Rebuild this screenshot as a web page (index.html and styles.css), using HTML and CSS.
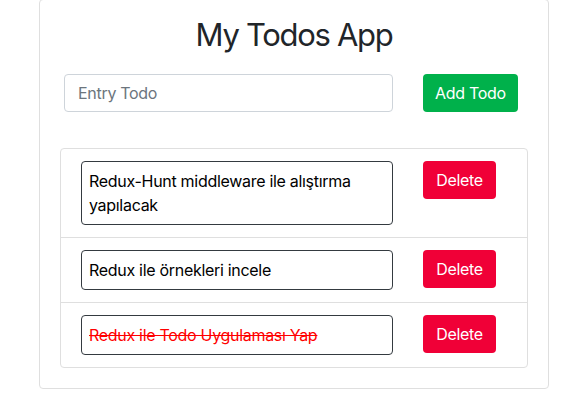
FILE: index.html
```html
<!DOCTYPE html>
<html lang="tr">
<head>
<meta charset="utf-8">
<title>My Todos App</title>
<link rel="stylesheet" href="styles.css">
</head>
<body>
<div class="card">
  <h2 class="title">My Todos App</h2>
  <form class="entry">
    <input class="entry-input" type="text" placeholder="Entry Todo">
    <button class="btn btn-add" type="button">Add Todo</button>
  </form>
  <ul class="list">
    <li class="item">
      <div class="todo-text">Redux-Hunt middleware ile alıştırma yapılacak</div>
      <button class="btn btn-del" type="button">Delete</button>
    </li>
    <li class="item">
      <div class="todo-text">Redux ile örnekleri incele</div>
      <button class="btn btn-del" type="button">Delete</button>
    </li>
    <li class="item">
      <div class="todo-text done">Redux ile Todo Uygulaması Yap</div>
      <button class="btn btn-del" type="button">Delete</button>
    </li>
  </ul>
</div>
</body>
</html>
```
FILE: styles.css
```css
* { box-sizing: border-box; }
html, body { margin: 0; padding: 0; background: #fff; }
body {
  font-family: Inter, "Helvetica Neue", "Liberation Sans", Arial, sans-serif;
  font-size: 16px;
  line-height: 24px;
  letter-spacing: -0.3px;
  color: #212529;
}
.card {
  width: 510px;
  margin: -1px 0 0 39px;
  padding: 16px 20px 20px;
  border: 1px solid #dfdfdf;
  border-radius: 4px;
}
.title {
  margin: 0 0 20px;
  font-size: 31px;
  line-height: 38px;
  font-weight: 400;
  letter-spacing: -1.3px;
  text-align: center;
  color: #212529;
}
.entry {
  display: flex;
  gap: 30px;
  margin: 0 0 36px;
  padding-left: 4px;
}
.entry-input {
  width: 329px;
  height: 38px;
  padding: 6px 13px;
  border: 1px solid #ced4da;
  border-radius: 4px;
  font: inherit;
  letter-spacing: inherit;
  color: #495057;
}
.entry-input::placeholder { color: #6c757d; }
.btn {
  height: 38px;
  padding: 6px 0;
  border: 0;
  border-radius: 4px;
  font: inherit;
  letter-spacing: inherit;
  white-space: nowrap;
  text-align: center;
  color: #fff;
  cursor: pointer;
}
.btn-add { width: 95px; background: #00b14b; }
.btn-del { width: 73px; background: #f00037; }
.list {
  list-style: none;
  margin: 0;
  padding: 0;
  border: 1px solid #dfdfdf;
  border-radius: 4px;
}
.item {
  display: flex;
  align-items: flex-start;
  gap: 30px;
  padding: 12px 20px;
}
.item + .item { border-top: 1px solid #dfdfdf; }
.todo-text {
  width: 312px;
  padding: 7px;
  border: 1px solid #343a40;
  border-radius: 4px;
  color: #000;
}
.todo-text.done {
  color: #ff0000;
  text-decoration: line-through;
}
```
